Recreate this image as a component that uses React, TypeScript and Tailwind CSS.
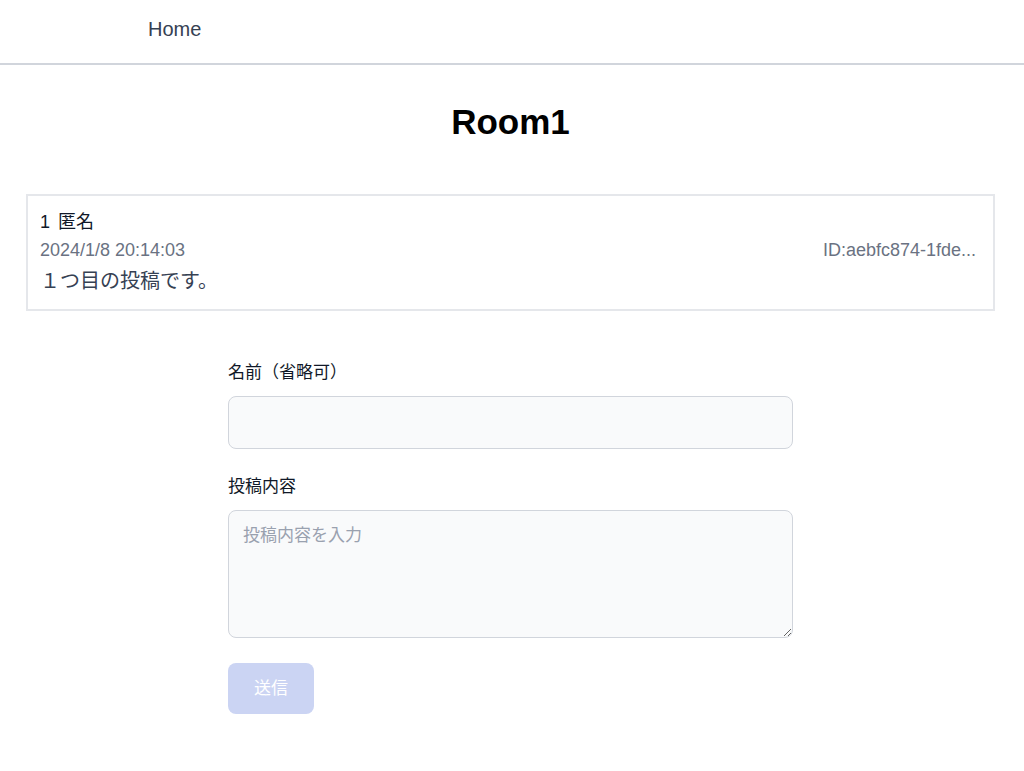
import React, { useState } from 'react';

const font = { fontFamily: '"Liberation Sans", "Noto Sans CJK JP", sans-serif' };

const App: React.FC = () => {
  const [name, setName] = useState('');
  const [content, setContent] = useState('');

  return (
    <div className="min-h-screen bg-white text-black" style={font}>
      <header className="h-[65px] border-b-2 border-gray-300 flex items-center pb-[5px]">
        <nav className="pl-[148px]">
          <a href="#" className="text-[20px] text-gray-700">Home</a>
        </nav>
      </header>

      <main className="mr-[3px]">
        <h1 className="mt-[37px] text-[35px] font-bold text-center leading-10">Room1</h1>

        <div className="mt-[52px] mx-[26px] border-2 border-gray-200 p-3">
          <div className="text-lg leading-7 text-gray-900">
            <span className="mr-[3px]">1</span> 匿名
          </div>
          <div className="flex justify-between text-lg leading-7 text-gray-500">
            <span>2024/1/8 20:14:03</span>
            <span className="mr-[5px]">ID:aebfc874-1fde...</span>
          </div>
          <p className="mt-px text-xl leading-8 text-gray-700">１つ目の投稿です。</p>
        </div>

        <form className="w-[565px] mx-auto mt-[50px]" onSubmit={(e) => e.preventDefault()}>
          <label className="block mb-[11px] text-[17px] leading-6 text-gray-900">名前（省略可）</label>
          <input
            value={name}
            onChange={(e) => setName(e.target.value)}
            className="block w-full h-[53px] px-3.5 rounded-lg border border-gray-300 bg-gray-50 text-[17px]"
          />
          <label className="block mt-[26px] mb-[11px] text-[17px] leading-6 text-gray-900">投稿内容</label>
          <textarea
            value={content}
            onChange={(e) => setContent(e.target.value)}
            placeholder="投稿内容を入力"
            className="block w-full h-[128px] px-3.5 py-3 rounded-lg border border-gray-300 bg-gray-50 text-[17px] placeholder:text-gray-400"
          />
          <button
            type="submit"
            disabled
            className="mt-[25px] w-[86px] h-[51px] rounded-lg bg-[#cbd4f3] text-white text-[17px]"
          >
            送信
          </button>
        </form>
      </main>
    </div>
  );
};

export default App;
